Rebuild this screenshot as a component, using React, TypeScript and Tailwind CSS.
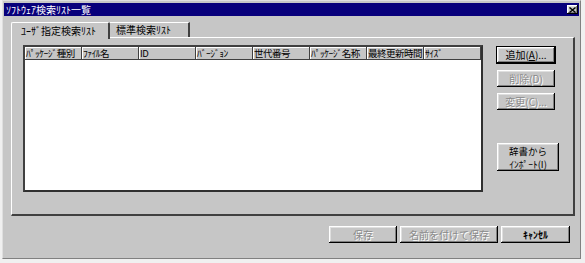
import { FC } from 'react';

const raised =
   'bg-[#c6c6c6] shadow-[inset_-1px_-1px_#000,inset_1px_1px_#fff,inset_-2px_-2px_#808080,inset_2px_2px_#dfdfdf]';

const Btn: FC<{ label: string; disabled?: boolean; def?: boolean; className?: string; children?: React.ReactNode }> = ({
   label,
   disabled,
   def,
   className,
   children,
}) => (
   <div
      className={
         'flex items-center justify-center text-[10px] leading-[12px] ' +
         raised +
         (def ? ' outline outline-1 outline-black' : '') +
         (disabled ? ' text-[#8a8a8a] [text-shadow:1px_1px_#fff]' : ' text-black') +
         ' ' +
         (className ?? '')
      }
   >
      {children ?? label}
   </div>
);

const cols = ['ﾊﾟｯｹｰｼﾞ種別', 'ﾌｧｲﾙ名', 'ID', 'ﾊﾞｰｼﾞｮﾝ', '世代番号', 'ﾊﾟｯｹｰｼﾞ名称', '最終更新時間', 'ｻｲｽﾞ'];

const App: FC = () => {
   return (
      <div
         className="w-[585px] h-[263px] bg-[#f0f0f0] pl-[2px] pt-0"
         style={{ fontFamily: '"Noto Sans CJK JP", "Liberation Sans", sans-serif' }}
      >
         <div className="w-[579px] h-[259px] bg-[#c6c6c6] border border-t-[#dfdfdf] border-l-[#dfdfdf] border-r-[#808080] border-b-[#808080] p-[1px]">
            {/* title bar */}
            <div className="h-[13px] mt-[1px] bg-[#08007b] flex items-center justify-between pl-[2px] pr-[1px]">
               <span className="text-white text-[10px] leading-[12px]">ｿﾌﾄｳｪｱ検索ﾘｽﾄ一覧</span>
               <div className={'w-[11px] h-[9px] flex items-center justify-center ' + raised}>
                  <svg width="7" height="6" viewBox="0 0 7 6">
                     <path d="M0.5 0.5 L6.5 5.5 M6.5 0.5 L0.5 5.5" stroke="#000" strokeWidth="1.4" />
                  </svg>
               </div>
            </div>

            {/* tabs */}
            <div className="flex items-end h-[21px] pl-[7px]">
               <div className="relative z-10 w-[99px] h-[17px] mb-[-2px] bg-[#c6c6c6] border-t border-l border-t-white border-l-white border-r-2 border-r-[#404040] rounded-t-[2px] flex items-center pl-[9px] text-[10px] leading-[12px] text-black">
                  ﾕｰｻﾞ指定検索ﾘｽﾄ
               </div>
               <div className="w-[80px] h-[15px] bg-[#c6c6c6] border-t border-t-white border-r-2 border-r-[#404040] flex items-center pl-[6px] text-[10px] leading-[12px] text-black">
                  標準検索ﾘｽﾄ
               </div>
            </div>

            {/* panel */}
            <div className="ml-[7px] w-[564px] h-[179px] border-t border-l border-t-white border-l-white border-r-2 border-b-2 border-r-[#404040] border-b-[#404040] flex pl-[11px] pt-[7px]">
               <div className="w-[460px] h-[147px] bg-white border-2 border-t-[#404040] border-l-[#404040] border-r-[#303030] border-b-[#303030]">
                  <div className="flex h-[13px]">
                     {cols.map((c, i) => (
                        <div
                           key={c}
                           className={
                              'h-[13px] bg-[#c6c6c6] border-r border-b border-r-[#404040] border-b-[#404040] shadow-[inset_1px_1px_#fff] pl-[1px] text-[9.5px] leading-[12px] tracking-[-0.5px] text-black whitespace-nowrap ' +
                              (i === 7 ? 'flex-1' : 'w-[57px]')
                           }
                        >
                           {c}
                        </div>
                     ))}
                  </div>
               </div>

               <div className="ml-[14px] flex flex-col w-[58px]">
                  <Btn label="追加(A)..." def className="h-[16px] mt-[2px]">
                     <span>
                        追加(<span className="underline">A</span>)...
                     </span>
                  </Btn>
                  <Btn label="削除(D)" disabled className="h-[17px] mt-[7px]" />
                  <Btn label="変更(C)..." disabled className="h-[17px] mt-[6px]" />
                  <Btn label="" className="h-[28px] mt-[33px] w-[62px] flex-col">
                     <span className="leading-[14px] text-[9.5px]">辞書から</span>
                     <span className="leading-[13px] text-[9.5px]">ｲﾝﾎﾟｰﾄ(I)</span>
                  </Btn>
               </div>
            </div>

            {/* bottom buttons */}
            <div className="flex justify-end gap-[3px] mt-[10px] pr-[9px]">
               <Btn label="保存" disabled className="w-[68px] h-[17px]" />
               <Btn label="名前を付けて保存" disabled className="w-[98px] h-[17px]" />
               <Btn label="ｷｬﾝｾﾙ" className="w-[69px] h-[17px] font-bold" />
            </div>
         </div>
      </div>
   );
};

export default App;
